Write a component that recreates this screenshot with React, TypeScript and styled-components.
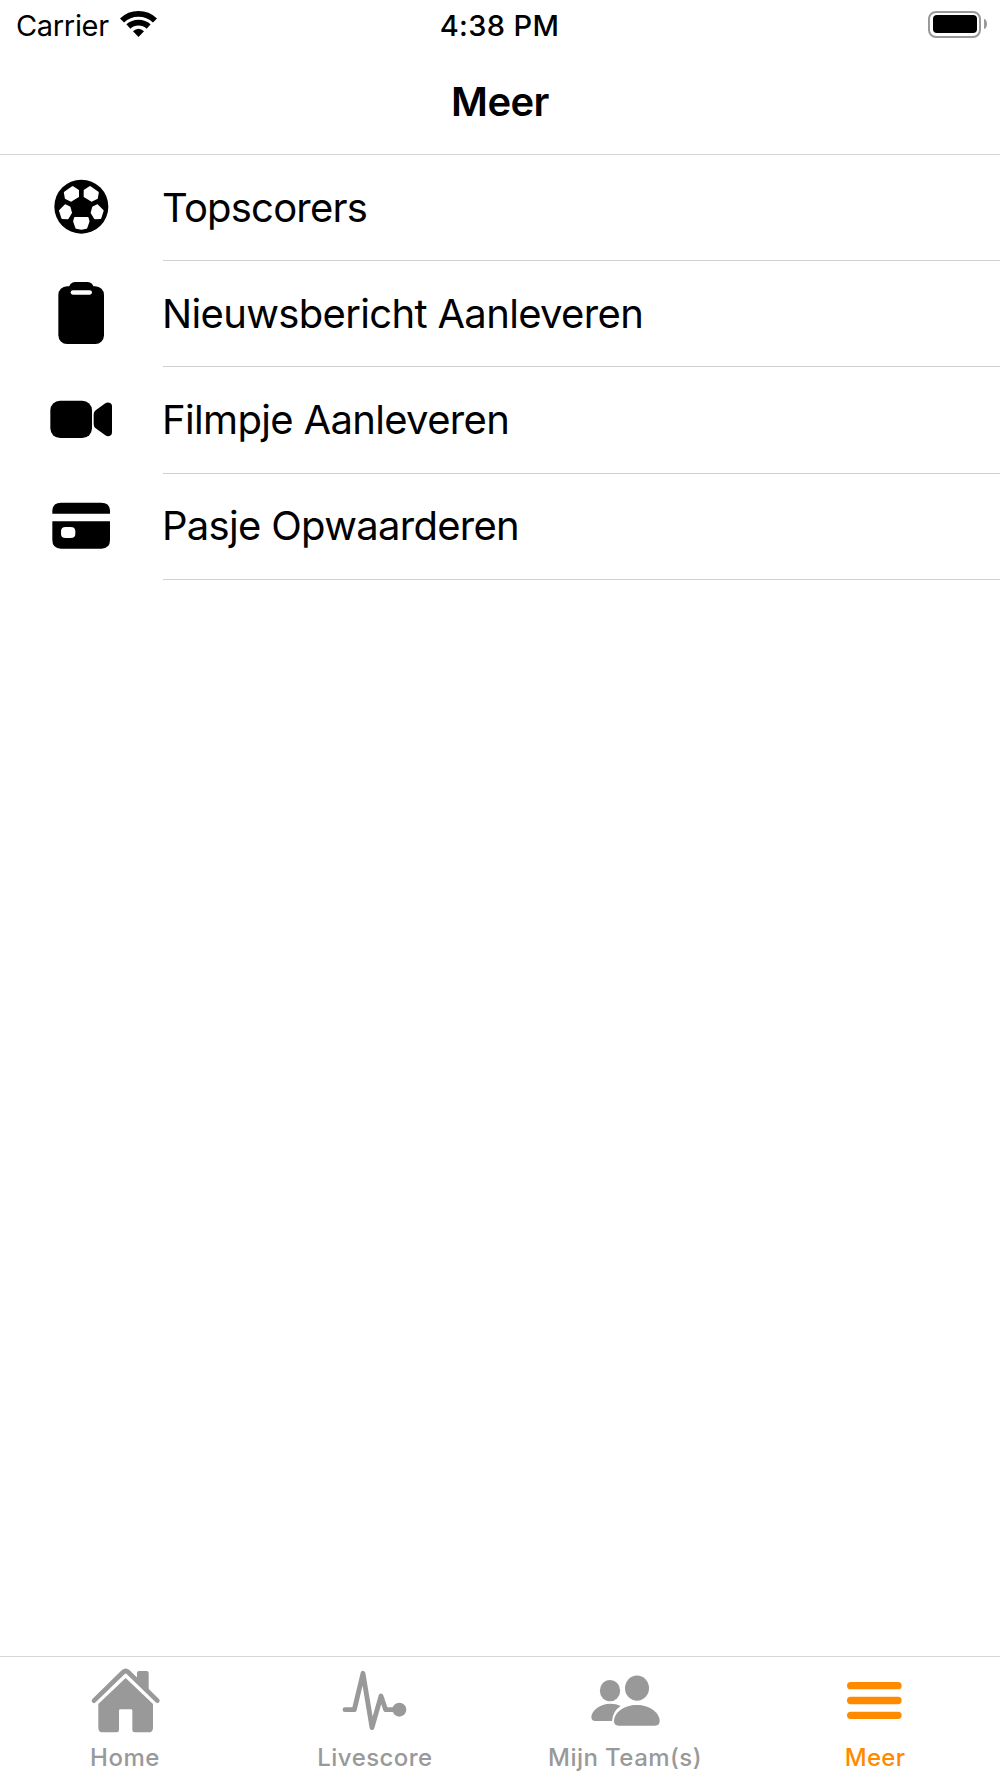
import React from 'react';
import styled, { createGlobalStyle } from 'styled-components';

const GlobalStyle = createGlobalStyle`
  *, *::before, *::after { box-sizing: border-box; }
  body { margin: 0; background: #fff; }
`;

const Screen = styled.div`
  display: flex;
  flex-direction: column;
  width: 1000px;
  height: 1778px;
  background: #fff;
  color: #000;
  font-family: Inter, 'Liberation Sans', sans-serif;
  overflow: hidden;
`;

const StatusBar = styled.div`
  display: grid;
  grid-template-columns: 1fr auto 1fr;
  align-items: center;
  flex: none;
  height: 51px;
  padding: 0 13px 0 16px;
  font-size: 29px;
  line-height: 51px;
`;

const Network = styled.div`
  display: flex;
  align-items: flex-start;
  gap: 11px;
  letter-spacing: -0.33px;
`;

const WifiGlyph = styled.svg`
  width: 37px;
  height: 27px;
  margin-top: 10px;
`;

const Clock = styled.time`
  margin-right: 4px;
  font-weight: 550;
  letter-spacing: 0.38px;
`;

const Power = styled.div`
  display: flex;
  align-items: center;
  justify-content: flex-end;
  gap: 3px;
  padding-bottom: 3px;
`;

const Battery = styled.div`
  display: flex;
  width: 53px;
  height: 27px;
  padding: 2.5px;
  border: 2px solid #999;
  border-radius: 8px;
`;

const Charge = styled.div`
  flex: 1;
  border-radius: 4px;
  background: #000;
`;

const BatteryCap = styled.div`
  width: 3px;
  height: 10px;
  border-radius: 0 3px 3px 0 / 0 5px 5px 0;
  background: #999;
`;

const Header = styled.header`
  display: flex;
  align-items: center;
  justify-content: center;
  flex: none;
  height: 104px;
  padding: 0 0 2px;
  border-bottom: 1px solid #d8d8d8;
`;

const Title = styled.h1`
  margin: 0;
  font-size: 40px;
  font-weight: 600;
  letter-spacing: -0.55px;
`;

const Menu = styled.ul`
  flex: 1;
  margin: 0;
  padding: 0;
  list-style: none;
`;

const MenuRow = styled.li<{ $height: number }>`
  display: grid;
  grid-template-columns: 163px 1fr;
  height: ${(p) => p.$height}px;
`;

const IconCell = styled.div`
  padding: 20px 0 0 49px;
`;

const MenuIcon = styled.svg`
  display: block;
  width: 64px;
  height: 64px;
`;

const MenuLabel = styled.div<{ $tracking: number; $leading: number }>`
  border-bottom: 1px solid #d0d0d3;
  font-size: 40px;
  line-height: ${(p) => p.$leading}px;
  letter-spacing: ${(p) => p.$tracking}px;
  text-indent: -1px;
  white-space: nowrap;
`;

const TabBar = styled.nav`
  display: grid;
  grid-template-columns: repeat(4, 1fr);
  flex: none;
  height: 122px;
  border-top: 1px solid #d8d8d8;
`;

const Tab = styled.div<{ $active?: boolean }>`
  display: flex;
  flex-direction: column;
  align-items: center;
  gap: 7px;
  padding-top: 7px;
  color: ${(p) => (p.$active ? '#ff8a00' : '#999')};
`;

const TabIcon = styled.svg`
  display: block;
  width: 80px;
  height: 72px;
`;

const TabLabel = styled.span<{ $tracking: number }>`
  font-size: 24px;
  font-weight: 450;
  line-height: 29px;
  letter-spacing: ${(p) => p.$tracking}px;
`;

const Ball = () => (
  <MenuIcon viewBox="0 0 192 192">
    <circle cx="97" cy="95" r="81" />
    <g fill="#fff" stroke="#fff" strokeWidth="6" strokeLinejoin="round">
      <path d="M71 36.500L87 47V64.500L66 77L50.500 69L47.500 53Z" />
      <path d="M123 36.500L107 47V64.500L128 77L143.500 69L146.500 53Z" />
      <path d="M49.500 91L61.500 97L66 113L56 130L40 129L33 107Z" />
      <path d="M144.500 91L132.500 97L128 113L138 130L154 129L161 107Z" />
      <path d="M78 129H116L118.500 139L112 158L97 161L82 158L75.500 139Z" />
    </g>
  </MenuIcon>
);

const Clipboard = () => (
  <MenuIcon viewBox="0 0 192 192">
    <rect x="28" y="16" width="137" height="173" rx="26" />
    <rect x="60" y="3" width="74" height="50" rx="18" />
    <rect x="65" y="28" width="64" height="13" rx="6.500" fill="#fff" />
  </MenuIcon>
);

const Video = () => (
  <MenuIcon viewBox="0 0 192 192">
    <rect x="4" y="41" width="125" height="112" rx="29" />
    <path d="M134 82Q134 74 140 70L169 49Q175 45 181 47Q189 49 189 58V136Q189 145 181 147Q175 149 169 145L140 124Q134 120 134 112Z" />
  </MenuIcon>
);

const Card = () => (
  <MenuIcon viewBox="0 0 192 192">
    <path d="M10 59V52Q10 26 36 26H157Q183 26 183 52V59Z" />
    <path
      fillRule="evenodd"
      d="M10 82H183V138Q183 164 157 164H36Q10 164 10 138ZM50 99Q36 99 36 112V119Q36 132 50 132H65Q79 132 79 119V112Q79 99 65 99Z"
    />
  </MenuIcon>
);

const House = () => (
  <TabIcon viewBox="0 0 240 216" fill="currentColor">
    <path
      d="M27 110L115 24Q122 18 129 24L217 110"
      fill="none"
      stroke="currentColor"
      strokeWidth="14"
      strokeLinecap="round"
      strokeLinejoin="round"
    />
    <path d="M156 50V27Q156 21 162 21H185Q191 21 191 27V84Z" />
    <path d="M122 42L204 120V191Q204 205 190 205H149Q142 205 142 198V140Q142 136 138 136H106Q102 136 102 140V198Q102 205 95 205H54Q40 205 40 191V120Z" />
  </TabIcon>
);

const Pulse = () => (
  <TabIcon viewBox="0 0 240 216" fill="currentColor">
    <path
      d="M30 137H58L84 28L111 191L138 96L152 137H193"
      fill="none"
      stroke="currentColor"
      strokeWidth="14.500"
      strokeLinecap="round"
      strokeLinejoin="round"
    />
    <circle cx="193" cy="137" r="21" />
  </TabIcon>
);

const People = () => (
  <TabIcon viewBox="0 0 240 216" fill="currentColor">
    <ellipse cx="156" cy="72.500" rx="36" ry="38" />
    <path d="M87 171C87 146 118 123 155 123C193 123 224 146 224 171Q224 185 210 185H101Q87 185 87 171Z" />
    <ellipse cx="75" cy="80" rx="30.500" ry="32" />
    <path d="M19 159C20 139 45 119 76 119Q94 119 107 126Q83 141 81 171H31Q19 171 19 159Z" />
  </TabIcon>
);

const Bars = () => (
  <TabIcon viewBox="0 0 240 216" fill="currentColor">
    <rect x="36" y="54" width="164" height="22" rx="11" />
    <rect x="36" y="98.500" width="164" height="22" rx="11" />
    <rect x="36" y="143" width="164" height="22" rx="11" />
  </TabIcon>
);

const Wifi = () => (
  <WifiGlyph viewBox="0 0 111 81">
    <g fill="none" stroke="#000" strokeWidth="17.500">
      <path d="M6 31.500A71.500 71.500 0 0 1 105 31.500" />
      <path d="M25 49.500A45.500 45.500 0 0 1 86 49.500" />
    </g>
    <path d="M39 64Q55.500 49 72 64L55.500 81Z" />
  </WifiGlyph>
);

const menu = [
  { label: 'Topscorers', icon: <Ball />, height: 106, tracking: -0.8, leading: 105 },
  { label: 'Nieuwsbericht Aanleveren', icon: <Clipboard />, height: 106, tracking: -0.66, leading: 105 },
  { label: 'Filmpje Aanleveren', icon: <Video />, height: 107, tracking: -0.66, leading: 105 },
  { label: 'Pasje Opwaarderen', icon: <Card />, height: 106, tracking: -0.7, leading: 103 },
];

const tabs = [
  { label: 'Home', icon: <House />, tracking: 0.55, active: false },
  { label: 'Livescore', icon: <Pulse />, tracking: 0.45, active: false },
  { label: 'Mijn Team(s)', icon: <People />, tracking: 0.45, active: false },
  { label: 'Meer', icon: <Bars />, tracking: 0.3, active: true },
];

export default function App() {
  return (
    <Screen>
      <GlobalStyle />
      <StatusBar>
        <Network>
          Carrier
          <Wifi />
        </Network>
        <Clock>4:38 PM</Clock>
        <Power>
          <Battery>
            <Charge />
          </Battery>
          <BatteryCap />
        </Power>
      </StatusBar>
      <Header>
        <Title>Meer</Title>
      </Header>
      <Menu>
        {menu.map((item) => (
          <MenuRow key={item.label} $height={item.height}>
            <IconCell>{item.icon}</IconCell>
            <MenuLabel $tracking={item.tracking} $leading={item.leading}>
              {item.label}
            </MenuLabel>
          </MenuRow>
        ))}
      </Menu>
      <TabBar>
        {tabs.map((tab) => (
          <Tab key={tab.label} $active={tab.active}>
            {tab.icon}
            <TabLabel $tracking={tab.tracking}>{tab.label}</TabLabel>
          </Tab>
        ))}
      </TabBar>
    </Screen>
  );
}
